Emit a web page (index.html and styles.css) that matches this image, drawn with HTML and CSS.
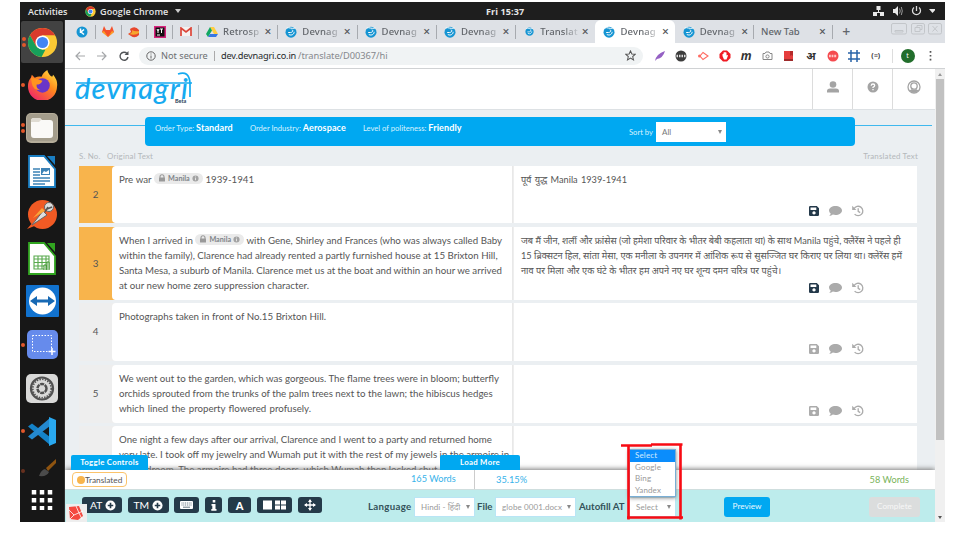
FILE: index.html
```
<!DOCTYPE html>
<html lang="en">
<head>
<meta charset="utf-8">
<title>Devnagri</title>
<link rel="stylesheet" href="styles.css">
</head>
<body>
<svg class="defs" width="0" height="0">
  <symbol id="dev" viewBox="0 0 12 12"><circle cx="6" cy="6.2" r="5.5" fill="#1695d3"/><path d="M1.5 2.2C4 .6 6 3.300 10.500 2M3.200 6.500h2.300c2.800-.2 2.800-2.500 1.300-2.700M3.800 8.500c3 1.500 5.500-.5 5.300-2.700" fill="none" stroke="#fff" stroke-width="1"/></symbol>
  <symbol id="save" viewBox="0 0 10 10"><path fill="currentColor" fill-rule="evenodd" d="M1.200 0h6.600L10 2.200v6.600Q10 10 8.800 10H1.200Q0 10 0 8.800V1.200Q0 0 1.200 0ZM1.500 1.600v2.400h5.800V1.600ZM5 5.300a1.600 1.600 0 1 0 .01 0Z"/></symbol>
  <symbol id="chat" viewBox="0 0 13 10"><path fill="currentColor" d="M6.500 0C10 0 13 1.900 13 4.500S10 9 6.500 9Q5 9 3.900 8.600 2.300 10 .2 10q1.300-1.200 1.500-2.500Q0 6.300 0 4.500C0 1.900 3 0 6.500 0Z"/></symbol>
  <symbol id="hist" viewBox="0 0 12 12"><path fill="none" stroke="currentColor" stroke-width="1.300" d="M2 3.700a4.700 4.700 0 1 1 .6 5.400M6.200 3.300v3.100l2 1.200"/><path fill="currentColor" d="M.2.700v4.200h4.200z"/></symbol>
  <symbol id="lock" viewBox="0 0 8 8"><path d="M2 4V2.700a2 2 0 0 1 4 0V4" fill="none" stroke="#999" stroke-width="1.100"/><rect x="1" y="3.600" width="6" height="4" rx=".6" fill="#999"/></symbol>
  <symbol id="inf" viewBox="0 0 8 8"><circle cx="4" cy="4" r="3.500" fill="#a3a3a3"/><path d="M4 3.500V6M4 1.800v1" stroke="#eee" stroke-width="1"/></symbol>
  <symbol id="plus" viewBox="0 0 12 12"><circle cx="6" cy="6" r="5.500" fill="#fff"/><path d="M6 3v6M3 6h6" stroke="#243a49" stroke-width="1.800"/></symbol>
  <symbol id="chrome" viewBox="0 0 32 32"><circle cx="16" cy="16" r="15" fill="#fbc934"/><path d="M3 8.500A15 15 0 0 1 29 8.500H16L9.500 20Z" fill="#da3b2c"/><path d="M3 8.500 9.500 20 16 23.500h3L15 31A15 15 0 0 1 3 8.500Z" fill="#17a05b"/><circle cx="16" cy="16" r="7.300" fill="#fff"/><circle cx="16" cy="16" r="5.800" fill="#4285f4"/></symbol>
</svg>

<div class="desktop">
  <div class="topbar">
    <span class="activities">Activities</span>
    <svg width="11" height="11"><use href="#chrome"/></svg>
    <span class="appname">Google Chrome</span><span class="caret"></span>
    <span class="clock">Fri 15:37</span>
    <svg class="tray" width="62" height="14" viewBox="0 0 62 14"><g fill="#e8e8e8"><rect x="3.500" y="2" width="4" height="4"/><rect x="0" y="8" width="4" height="4"/><rect x="7" y="8" width="4" height="4"/><path d="M5 6h1v2h4v1H1V8h4zM20 5h2l3-3v10l-3-3h-2zM56 5h7l-3.500 4z"/></g><g fill="none" stroke="#ddd"><path d="M26.500 4.500q1.500 2.500 0 5M28.300 3q2 4 0 8" stroke="#999"/><path d="M41 3.500a4 4 0 1 0 5 0M43.500 2v5" stroke-width="1.300"/></g></svg>
  </div>
  <div class="work">
    <div class="dock">
      <div class="app on"><i class="dots two"></i><svg width="31" height="31"><use href="#chrome"/></svg></div>
      <div class="app"><i class="dots"></i><svg width="31" height="31" viewBox="0 0 32 32"><defs><linearGradient id="ff" x1="1" y1="0" x2=".2" y2="1"><stop offset="0" stop-color="#fff04a"/><stop offset=".45" stop-color="#ff8a1c"/><stop offset="1" stop-color="#f0236b"/></linearGradient></defs><path d="M5 6l3 3q4-2 7-1Q17 3 21 1q1 5 5 7l1-2q5 6 4 12a15 15 0 0 1-30 0Q1 12 4 9Z" fill="url(#ff)"/><circle cx="16" cy="17" r="7.500" fill="#6a35c9"/><path d="M4 9q7 1 12 3-2 4-6 4-1 4 4 6-8 0-9-7Z" fill="#ff951f"/></svg></div>
      <div class="app"><i class="dots two"></i><svg width="32" height="30" viewBox="0 0 32 30"><rect width="32" height="30" rx="5" fill="#b5ad9a"/><rect x="1" y="1" width="30" height="27" rx="4" fill="#a49d8c"/><path d="M5 8q0-3 3-3h6l2 2h8q3 0 3 3v12q0 3-3 3H8q-3 0-3-3Z" fill="#faf9f7"/><path d="M5 8q0-3 3-3h6l1 2-2 2H5z" fill="#dfdbd2"/></svg></div>
      <div class="app"><svg width="28" height="33" viewBox="0 0 28 33"><path d="M1 1h15l11 13v18H1Z" fill="#fff" stroke="#1a7ec2" stroke-width="1.800"/><path d="M19 1h8v9Z" fill="#1a7ec2"/><path d="M5 14h7M5 17h7M5 20h7M5 23h17M5 26h17M5 29h12" stroke="#3d82b5" stroke-width="1.300"/><rect x="13" y="13" width="9" height="7" fill="#3d82b5"/><path d="M14 19l2-3 2 1 3-2v4Z" fill="#fff"/></svg></div>
      <div class="app"><svg width="31" height="31" viewBox="0 0 31 31"><circle cx="15.500" cy="15.500" r="14.500" fill="#f15a24"/><path d="M0 30l7-8 3 4Z" fill="#f15a24"/><path d="M5 26 16 12l4 4Z" fill="#ddd" stroke="#666"/><path d="M6 19 15 9l3 3Z" fill="#f9a63a"/><circle cx="22" cy="8" r="4.500" fill="#ddd" stroke="#666"/><path d="M18 13l3-5M20 10l5-2" stroke="#555" stroke-width="1.500"/></svg></div>
      <div class="app"><svg width="28" height="33" viewBox="0 0 28 33"><path d="M1 1h15l11 13v18H1Z" fill="#fff" stroke="#31a520" stroke-width="1.800"/><path d="M19 1h8v9Z" fill="#31a520"/><path d="M6 14h15v13H6ZM6 17h15M6 20.500h15M6 24h15M10 14v13M14 14v13M18 14v13" fill="none" stroke="#58a94c" stroke-width="1.100"/><path d="M16 28v-5h2v5M19 28v-8h2v8" stroke="#399128" fill="#fff"/></svg></div>
      <div class="app"><svg width="33" height="32" viewBox="0 0 33 32"><rect width="33" height="32" rx="1" fill="#1172ce"/><circle cx="16.500" cy="16" r="13.500" fill="#fff"/><path d="M4 16l7-5v3.500h11V11l7 5-7 5v-3.500H11V21Z" fill="#1769b4"/></svg></div>
      <div class="app"><i class="dots"></i><svg width="31" height="29" viewBox="0 0 31 29"><rect width="31" height="29" rx="5" fill="#668bec"/><rect x="5.500" y="5.500" width="19" height="16" fill="none" stroke="#fff" stroke-dasharray="1.500 1.500"/><path d="M25 18v7M21.500 21.500h7" stroke="#fff" stroke-width="1.500"/></svg></div>
      <div class="app"><svg width="32" height="29" viewBox="0 0 32 29"><rect width="32" height="29" rx="5" fill="#d9d9d8"/><g fill="none" stroke="#505050"><circle cx="16" cy="14.500" r="11" stroke-width="2.200"/><circle cx="16" cy="14.500" r="9.200" stroke-width="1.600" stroke-dasharray="1.400 1.300"/><circle cx="16" cy="14.500" r="4.500" stroke-width="2.500" stroke-dasharray="4 .7"/></g></svg></div>
      <div class="app"><i class="dots"></i><svg width="29" height="29" viewBox="0 0 29 29"><path d="M0 9.500 4 6.500 22 20v8Z" fill="#1482c8"/><path d="M0 19.500 4 22.500 22 9V1Z" fill="#2489cf"/><path d="M21 0l7 3v23l-7 3Z" fill="#29a8ef"/></svg></div>
      <div class="app brush"><i class="dots"></i><svg width="18" height="18" viewBox="0 0 18 18"><path d="M7 9 17 0v4L9 12Z" fill="#8f5410"/><path d="M0 17q2-6 6-7l4 3q-2 5-10 4Z" fill="#4b4b4b"/></svg></div>
      <svg class="grid" width="22" height="22" viewBox="0 0 22 22"><path d="M3 1v20M11 1v20M19 1v20" stroke="#fff" stroke-width="4.500" stroke-dasharray="4.500 3.500"/></svg>
    </div>

    <div class="browser">
      <div class="tabs">
        <div class="pin"><svg width="12" height="12"><circle cx="6" cy="6" r="5.500" fill="#1695d3"/><path d="M4.500 2.500v4.500M8 3.500 5 6l3 2.500" stroke="#fff" stroke-width="1.500" fill="none"/></svg></div>
        <div class="pin"><svg width="12" height="11" viewBox="0 0 12 11"><path d="M2 0l2 4h4l2-4 2 6-6 5-6-5Z" fill="#f5512c"/><path d="M0 6l2-1 4 6ZM12 6l-2-1-4 6Z" fill="#fca326"/></svg></div>
        <div class="pin"><svg width="12" height="12"><path d="M2 3q5-4 9 1v5q-4 4-8 1L0 8l3-2Z" fill="#e8472c"/><path d="M1 8q4-1 3-4 3 2 7 1v2q-4 3-10 1Z" fill="#f5a72d"/></svg></div>
        <div class="pin"><svg width="12" height="12"><path d="M0 0h12v12H0Z" fill="#d8237d"/><path d="M1.500 1.500h9v9h-9Z" fill="#111"/><path d="M3 3l1 2 1-2M4 5v2M6 3h3M7.500 3v4M3 9h3" stroke="#fff" fill="none"/></svg></div>
        <div class="pin"><svg width="12" height="9" viewBox="0 0 12 9"><path d="M0 0h12v9H0Z" fill="#f5f0ef"/><path d="M1 9V1l5 4 5-4v8" fill="none" stroke="#db4437" stroke-width="1.700"/></svg></div>
        <div class="tab"><svg width="12" height="12" viewBox="0 0 12 12"><path d="M4 1h4l4 7H8Z" fill="#ffcd40"/><path d="M4 1l2 3.500L2 11 0 8Z" fill="#11a861"/><path d="M4 8h8l-2 3H2Z" fill="#3777e3"/></svg><span class="t">Retrosp</span><b>×</b></div>
        <div class="tab"><svg width="12" height="12"><use href="#dev"/></svg><span class="t">Devnag</span><b>×</b></div>
        <div class="tab"><svg width="12" height="12"><use href="#dev"/></svg><span class="t">Devnag</span><b>×</b></div>
        <div class="tab"><svg width="12" height="12"><use href="#dev"/></svg><span class="t">Devnag</span><b>×</b></div>
        <div class="tab last"><svg class="small" width="9" height="9"><use href="#dev"/></svg><span class="t">Translat</span><b>×</b></div>
        <div class="tab active"><svg width="12" height="12"><use href="#dev"/></svg><span class="t">Devnag</span><b>×</b></div>
        <div class="tab"><svg width="12" height="12"><use href="#dev"/></svg><span class="t">Devnag</span><b>×</b></div>
        <div class="tab new"><span>New Tab</span><b>×</b></div>
        <span class="add">+</span>
        <svg class="winbtns" width="52" height="12" viewBox="0 0 52 12"><g fill="none" stroke="#c3c6ca"><rect x=".5" y=".5" width="15" height="10.500" rx="1.500"/><rect x="20.500" y=".5" width="13" height="10.500" rx="1.500"/><rect x="37.500" y=".5" width="13" height="10.500" rx="1.500"/><path d="M4 7.500h8v1.500H4zM24 4.500h5v4h-5zM26 4.500v-2h5v4h-2M41.500 3l5 5.500M46.500 3l-5 5.500"/></g></svg>
      </div>

      <div class="toolbar">
        <svg class="nav" width="56" height="12" viewBox="0 0 56 12"><g fill="none" stroke-width="1.200"><path d="M10 6H1M5 2 1 6l4 4M22 6h9M27 2l4 4-4 4" stroke="#a5a7aa"/><path d="M52 3.500A4 4 0 1 0 53 7" stroke="#505356" stroke-width="1.400"/></g><path d="M53.500 1v4h-4z" fill="#505356"/></svg>
        <div class="omni">
          <svg width="10" height="10"><circle cx="5" cy="5" r="4.200" fill="none" stroke="#666"/><path d="M5 4.500V7.500M5 2.500v1" stroke="#666"/></svg>
          <span class="ns">Not secure</span><span class="bar"></span><span class="host">dev.devnagri.co.in</span><span class="path">/translate/D00367/hi</span>
          <svg class="star" width="11" height="11" viewBox="0 0 12 12"><path d="M6 1l1.500 3.400 3.700.3-2.800 2.400.9 3.700L6 8.900l-3.300 1.900.9-3.700L.8 4.700l3.700-.3Z" fill="none" stroke="#555" stroke-width="1.100"/></svg>
        </div>
        <div class="exts">
          <div><svg width="12" height="12"><path d="M1 11Q2 4 11 1 9 8 3 9Z" fill="#9561c4"/></svg></div>
          <div><svg width="12" height="12"><circle cx="6" cy="6" r="5.500" fill="#3c3c3c"/><path d="M1.500 6h9" stroke="#ddd" stroke-width="2.500" stroke-dasharray="1.500 1"/></svg></div>
          <div><svg width="12" height="12"><path d="M6 2.500 11 6 6 9.500 3 6Z" fill="none" stroke="#ff6b62" stroke-width="1.100"/><circle cx="2.500" cy="6" r="1.500" fill="#ff6b62"/></svg></div>
          <div><svg width="12" height="12"><path d="M4 .5h4L11.500 4v4L8 11.500H4L.5 8V4Z" fill="#f01a23"/><path d="M3.500 6V4h1V2.500h1V2h1v.5h1v3l1-.5.5.5-1.500 4H5Z" fill="#fff"/></svg></div>
          <div class="m">m</div>
          <div><svg width="11" height="10" viewBox="0 0 11 10"><path d="M1 2.500h2l1-1.500h3l1 1.500h2v6H1Z" fill="none" stroke="#888"/><circle cx="5.500" cy="5.500" r="1.600" fill="none" stroke="#888"/></svg></div>
          <div><svg width="10" height="12"><path d="M0 1h9v8H0Z" fill="#e53e3e"/><path d="M0 9h9v2H0Z" fill="#9e2b2b"/><path d="M6 1v5l1.500-1L9 6V1" fill="#b52a2a"/></svg></div>
          <div class="hi">अ</div>
          <div><svg width="12" height="12"><circle cx="6" cy="6" r="5.500" fill="#f54a4f"/><path d="M2 6h8" stroke="#ffc6c6" stroke-width="2.500" stroke-dasharray="1.800 .8"/></svg></div>
          <div><svg width="12" height="12"><path d="M3 0v12M9 0v12M0 3h12M0 9h12" stroke="#2863a8" stroke-width="1.500"/></svg></div>
          <div class="code">(≡)</div>
        </div>
        <span class="tsep"></span><span class="avatar">t</span>
        <svg class="more" width="3" height="10"><path d="M1.500 0v10" stroke="#555" stroke-width="1.700" stroke-dasharray="1.700 2.200"/></svg>
      </div>

      <div class="view">
        <div class="page">
          <div class="head">
            <div class="logo">devnagri<span class="beta">Beta</span><svg class="flourish" width="120" height="34" viewBox="0 0 120 34"><path d="M1 13h116M103 4q11-4 12 9v14" fill="none" stroke="#16aaf0" stroke-width="1.700"/></svg></div>
            <div class="cell"><svg width="12" height="12"><circle cx="6" cy="3.500" r="3.300" fill="#a4a4a4"/><path d="M0 11.500V10q0-2.500 3-2.500h6q3 0 3 2.500v1.500Z" fill="#a4a4a4"/></svg></div>
            <div class="cell"><svg width="12" height="12"><circle cx="6" cy="6" r="5.500" fill="#a4a4a4"/><path d="M4.200 4.700Q4.300 3 6 3t1.700 1.500Q7.700 5.500 6 6.300v.8M6 8v1.300" stroke="#fff" stroke-width="1.300" fill="none"/></svg></div>
            <div class="cell end"><svg width="14" height="14"><circle cx="7" cy="7" r="6" fill="none" stroke="#a4a4a4" stroke-width="1.300"/><circle cx="7" cy="6" r="3.200" fill="none" stroke="#a4a4a4" stroke-width="1.300"/><path d="M2.500 10.500 5 9q2 1 4 0l2.500 1.500Q7 15 2.500 10.500Z" fill="#a4a4a4"/></svg></div>
          </div>
          <div class="orderline">
            <div class="order">
              <span class="o1">Order Type: <b>Standard</b></span><span class="o2">Order Industry: <b>Aerospace</b></span><span class="o3">Level of politeness: <b>Friendly</b></span>
              <span class="sort">Sort by</span><span class="select all">All<i></i></span>
            </div>
          </div>
          <div class="labels"><span class="sn">S. No.</span><span>Original Text</span><span class="tt">Translated Text</span></div>

          <div class="rows">
            <div class="row done h57">
              <div class="num">2</div>
              <div class="src"><p class="line w135">Pre war <span class="chip"><svg width="8" height="8"><use href="#lock"/></svg>Manila<svg width="7" height="7"><use href="#inf"/></svg></span> 1939-1941</p></div>
              <div class="dst"><p class="line w106">पूर्व युद्ध Manila 1939-1941</p><div class="acts dark"><svg width="10" height="10"><use href="#save"/></svg><svg width="13" height="10"><use href="#chat"/></svg><svg width="12" height="12"><use href="#hist"/></svg></div></div>
            </div>
            <div class="row done h73">
              <div class="num">3</div>
              <div class="src">
                <p class="line w383">When I arrived in <span class="chip"><svg width="8" height="8"><use href="#lock"/></svg>Manila<svg width="7" height="7"><use href="#inf"/></svg></span> with Gene, Shirley and Frances (who was always called Baby</p>
                <p class="line w377">within the family), Clarence had already rented a partly furnished house at 15 Brixton Hill,</p>
                <p class="line w382">Santa Mesa, a suburb of Manila. Clarence met us at the boat and within an hour we arrived</p>
                <p class="line w190">at our new home zero suppression character.</p>
              </div>
              <div class="dst">
                <p class="line w379">जब मैं जीन, शर्ली और फ्रांसेस (जो हमेशा परिवार के भीतर बेबी कहलाता था) के साथ Manila पहुंचे, क्लैरेंस ने पहले ही</p>
                <p class="line w381">15 ब्रिक्सटन हिल, सांता मेसा, एक मनीला के उपनगर में आंशिक रूप से सुसज्जित घर किराए पर लिया था। क्लेरेंस हमें</p>
                <p class="line w260">नाव पर मिला और एक घंटे के भीतर हम अपने नए घर शून्य दमन चरित्र पर पहुंचे।</p>
                <div class="acts dark"><svg width="10" height="10"><use href="#save"/></svg><svg width="13" height="10"><use href="#chat"/></svg><svg width="12" height="12"><use href="#hist"/></svg></div>
              </div>
            </div>
            <div class="row h58">
              <div class="num">4</div>
              <div class="src"><p class="line w207">Photographs taken in front of No.15 Brixton Hill.</p></div>
              <div class="dst"><div class="acts"><svg width="10" height="10"><use href="#save"/></svg><svg width="13" height="10"><use href="#chat"/></svg><svg width="12" height="12"><use href="#hist"/></svg></div></div>
            </div>
            <div class="row h58">
              <div class="num">5</div>
              <div class="src">
                <p class="line w380">We went out to the garden, which was gorgeous. The flame trees were in bloom; butterfly</p>
                <p class="line w371">orchids sprouted from the trunks of the palm trees next to the lawn; the hibiscus hedges</p>
                <p class="line w192">which lined the property flowered profusely.</p>
              </div>
              <div class="dst"><div class="acts"><svg width="10" height="10"><use href="#save"/></svg><svg width="13" height="10"><use href="#chat"/></svg><svg width="12" height="12"><use href="#hist"/></svg></div></div>
            </div>
            <div class="row h58">
              <div class="num"></div>
              <div class="src">
                <p class="line w371">One night a few days after our arrival, Clarence and I went to a party and returned home</p>
                <p class="line w387">very late. I took off my jewelry and Wumah put it with the rest of my jewels in the armoire in</p>
                <p class="line w315">the bedroom. The armoire had three doors, which Wumah then locked shut.</p>
              </div>
              <div class="dst"></div>
            </div>
          </div>

          <div class="footer">
            <div class="flytabs"><span class="toggle">Toggle Controls</span><span class="load">Load More</span></div>
            <div class="stats">
              <span class="status"><i></i>Translated</span>
              <span class="words">165 Words</span><span class="pct">35.15%</span><span class="green">58 Words</span>
            </div>
            <div class="controls">
              <span class="btn at">AT<svg width="11" height="11"><use href="#plus"/></svg></span>
              <span class="btn tm">TM<svg width="11" height="11"><use href="#plus"/></svg></span>
              <span class="btn kb"><svg width="13" height="8"><rect width="13" height="8" rx="1" fill="#fff"/><path d="M1.500 2h10M1.500 4h10" stroke="#617480" stroke-dasharray="1 .8"/><path d="M3 6.200h7" stroke="#617480"/></svg></span>
              <span class="btn in"><svg width="6" height="11"><path d="M1.700 0h2.600v2.500H1.700ZM.5 4h4v5h1v1.800H.3V9h1V5.800H.5Z" fill="#fff"/></svg></span>
              <span class="btn aa">A</span>
              <span class="btn sp"><svg width="23" height="10"><path d="M0 .5h9v9H0zM12 .5h5v4h-5zM18 .5h5v4h-5zM12 5.500h5v4h-5zM18 5.500h5v4h-5z" fill="#fff"/></svg></span>
              <span class="btn mv"><svg width="12" height="12"><path d="M6 1v10M1 6h10" stroke="#fff" stroke-width="1.300"/><path d="M6 0l2 3H4zM6 12 4 9h4zM0 6l3-2v4zM12 6 9 8V4z" fill="#fff"/></svg></span>
              <span class="lab lang">Language</span><span class="select s1">Hindi - हिंदी<i></i></span>
              <span class="lab file">File</span><span class="select s2">globe 0001.docx<i></i></span>
              <span class="lab auto">Autofill AT</span><span class="select s3">Select<i></i></span>
              <span class="preview">Preview</span><span class="complete">Complete</span>
            </div>
          </div>
        </div>
        <div class="scroll"><i class="up"></i><div class="thumb"></div><i class="down"></i></div>
      </div>
    </div>
  </div>

  <div class="menu"><div class="sel">Select</div><div>Google</div><div>Bing</div><div>Yandex</div></div>
  <svg class="mark" width="64" height="80" viewBox="0 0 64 80"><path d="M0 3.500h31M30 2.500h31.500M59.500 1.500v76M62 75.500H6M7.500 77.500V4" fill="none" stroke="#f80b13" stroke-width="2.600"/></svg>
  <div class="badge"><svg width="14" height="14"><path d="M0 1l10-1 4 10-5 4-8-1Z" fill="#f4493f"/><path d="M0 4l5 5 9-4M5 9l-4 4M7 0l3 7 3 6" stroke="#fff" stroke-width=".8" fill="none"/></svg></div>
</div>
</body>
</html>
```
FILE: styles.css
```
* { box-sizing: border-box; }
body { margin: 0; background: #fff; width: 964px; height: 552px; overflow: hidden; font-family: Lato, "Noto Sans", sans-serif; color: #555; }
svg { display: block; flex: none; }
.defs { position: absolute; }
p { margin: 0; }

.desktop { position: relative; width: 925px; height: 520px; margin: 2px 0 0 20px; background: #171717; }
.topbar { position: relative; height: 18px; display: flex; align-items: center; background: #1e1e1e; color: #e6e6e6; font: 600 9px "Open Sans", sans-serif; }
.activities { width: 65px; padding-left: 8px; white-space: nowrap; }
.appname { margin-left: 4px; width: 72px; white-space: nowrap; letter-spacing: .1px; }
.caret { margin-left: 3px; border: 3px solid transparent; border-top: 4px solid #ccc; border-bottom: 0; }
.clock { margin-left: 305px; white-space: nowrap; font-weight: 700; letter-spacing: .1px; }
.tray { margin-left: auto; margin-right: 10px; }

.work { display: flex; height: 502px; }
.dock { width: 45px; flex: none; background: #171717; border-right: 1px solid #303030; }
.app { position: relative; height: 43.300px; display: flex; align-items: center; justify-content: center; }
.app.on { background: #424242; height: 42px; margin: 1px 1px .3px; border-radius: 2px; }
.app.brush { height: 36px; padding: 0 0 6px 12px; }
.dots { position: absolute; left: 1px; top: 50%; width: 4px; height: 4px; margin-top: -2px; border-radius: 50%; background: #e2572a; }
.dots.two { margin-top: -5px; box-shadow: 0 6px 0 #e2572a; }
.brush .dots { opacity: .4; }
.grid { margin: 0 auto; }

.browser { flex: 1; min-width: 0; display: flex; flex-direction: column; background: #fff; }
.tabs { height: 23px; display: flex; align-items: center; padding-left: 5px; background: #dee1e6; font: 500 9.500px "Noto Sans", sans-serif; color: #61656a; }
.pin { width: 25.800px; height: 14px; display: flex; align-items: center; justify-content: center; border-right: 1px solid #a7aaaf; }
.tab { width: 79.300px; height: 14px; display: flex; align-items: center; padding-left: 7px; border-right: 1px solid #a7aaaf; }
.tab .t { width: 39px; margin-left: 5px; overflow: hidden; white-space: nowrap; letter-spacing: .15px; -webkit-mask-image: linear-gradient(90deg, #000 60%, transparent 105%); mask-image: linear-gradient(90deg, #000 60%, transparent 105%); }
.tab b { width: 12px; text-align: center; font: 500 12px/12px "Noto Sans", sans-serif; color: #54575b; }
.tab .small { margin: 0 1px 0 2px; }
.tab.last { border: 0; }
.tab.active { height: 23px; background: #fff; border: 0; border-radius: 6px 6px 0 0; padding-left: 8px; }
.tab.active + .tab { padding-left: 8px; }
.tab.new { padding-left: 7px; white-space: nowrap; }
.tab.new b { margin-left: auto; margin-right: 4px; }
.add { margin-left: 9px; font-size: 14px; line-height: 14px; }
.winbtns { margin: -6px 2px 0 auto; }

.toolbar { height: 26px; display: flex; align-items: center; border-bottom: 1px solid #d0d2d4; font: 9.500px "Noto Sans", sans-serif; }
.nav { margin-left: 10px; }
.omni { width: 504px; height: 18px; margin-left: 8px; border-radius: 9px; background: #f0f3f4; display: flex; align-items: center; padding: 0 7px; white-space: nowrap; }
.ns { width: 47px; margin-left: 5px; color: #6b6e71; font-size: 9.200px; }
.bar { width: 1px; height: 10px; margin: 0 6px; background: #aaa; }
.host { width: 77px; color: #25282b; font-size: 9.200px; letter-spacing: -.18px; }
.path { color: #85888c; font-size: 9.300px; letter-spacing: -.05px; }
.star { margin-left: auto; }
.exts { display: flex; margin-left: 6px; }
.exts > div { width: 21.600px; height: 16px; display: flex; align-items: center; justify-content: center; color: #333; }
.exts .m { font: italic bold 12px "Noto Sans", sans-serif; }
.exts .hi { font-weight: 700; font-size: 11px; }
.exts .code { font-weight: 700; font-size: 7px; }
.tsep { width: 1px; height: 14px; margin-left: 5px; background: #ddd; }
.avatar { width: 14px; height: 14px; margin-left: 8px; border-radius: 50%; background: #226e2c; color: #fff; font-size: 7px; line-height: 13px; text-align: center; }
.more { margin-left: 14px; }

.view { flex: 1; min-height: 0; display: flex; }
.page { width: 870px; flex: none; background: #ebeff2; display: flex; flex-direction: column; overflow: hidden; position: relative; }
.head { height: 41px; flex: none; display: flex; background: #fff; border-bottom: 1px solid #dde1e4; }
.logo { position: relative; width: 747px; padding-left: 10px; color: #16aaf0; font: italic 500 29px/38px Lato, sans-serif; letter-spacing: 1.200px; }
.flourish { position: absolute; left: 10px; top: 1px; }
.beta { position: absolute; left: 110px; top: 29px; color: #273b58; font: bold 5.500px/6px Lato, sans-serif; letter-spacing: 0; }
.cell { width: 40px; border-left: 1px solid #dcdcdc; display: flex; align-items: center; justify-content: center; padding-bottom: 4px; }
.cell.end { width: 43px; }
.orderline { height: 37px; flex: none; padding: 7px 0 0 80px; background: linear-gradient(#3fb8ee, #3fb8ee) 0 15px / 867px 1px no-repeat; }
.order { width: 710px; height: 29px; border-radius: 4px; background: #00a8f1; color: #d9f2fe; display: flex; padding-left: 10px; font-size: 7.600px; line-height: 22px; white-space: nowrap; }
.order b { font-size: 9px; color: #fff; letter-spacing: .12px; }
.o1 { width: 95px; }
.o2 { width: 113px; }
.o3 { width: 266px; }
.sort { width: 27px; line-height: 30px; }
.select { display: flex; align-items: center; background: #fff; color: #999; white-space: nowrap; font-size: 8px; line-height: 18px; padding: 0 4px 0 6px; border: 1px solid #b9e5f5; }
.select i { margin-left: auto; border: 2.500px solid transparent; border-top: 4px solid #888; border-bottom: 0; }
.all { width: 70px; height: 20px; margin-top: 5px; color: #777; border: 0; }
.labels { height: 19px; flex: none; display: flex; padding: 0 17px 0 14px; font-size: 7.900px; line-height: 18px; letter-spacing: .2px; color: #b4b8bb; }
.sn { width: 28px; }
.tt { margin-left: auto; }

.rows { flex: none; padding-left: 14px; }
.row { display: flex; width: 838px; margin-bottom: 4px; background: #eee; }
.h57 { height: 57px; }
.h73 { height: 73px; margin-bottom: 3px; }
.h58 { height: 58px; margin-bottom: 3.500px; }
.num { width: 33px; display: flex; align-items: center; justify-content: center; padding-bottom: 2px; font-size: 9.800px; color: #555; }
.done .num { background: #f8b44c; box-shadow: 3px 0 #f8b44c; }
.src { position: relative; width: 401px; background: #fff; border-radius: 4px 0 0 4px; padding: 6px 0 0 7px; border-right: 1px solid #e8e8e8; }
.dst { position: relative; width: 403px; margin-left: 1px; background: #fff; padding: 6px 0 0 7px; }
.line { height: 15.100px; font-size: 9.700px; line-height: 15px; color: #555; white-space: nowrap; text-align: justify; text-align-last: justify; }
.dst .line { font-family: Lato, "Noto Sans", "Noto Sans Devanagari", sans-serif; font-size: 9.200px; }
.w106 { width: 106px; } .w135 { width: 135px; } .w190 { width: 190px; } .w192 { width: 192px; }
.w207 { width: 207px; } .w260 { width: 260px; } .w315 { width: 315px; } .w371 { width: 371px; }
.w377 { width: 377px; } .w379 { width: 379px; } .w380 { width: 380px; } .w381 { width: 381px; }
.w382 { width: 382px; } .w383 { width: 383px; } .w387 { width: 387px; }
.chip { display: inline-flex; align-items: center; gap: 2px; height: 11px; padding: 0 4px; border-radius: 6px; background: #eaeaea; color: #7d8388; font-size: 7.200px; font-weight: 700; line-height: 11px; vertical-align: 1px; }
.acts { position: absolute; left: 295px; bottom: 6px; height: 12px; display: flex; align-items: center; color: #ababab; }
.acts svg + svg { margin-left: 10px; }
.acts.dark svg:first-child { color: #24394a; }

.footer { position: absolute; left: 0; right: 0; bottom: 0; height: 52px; background: #fff; box-shadow: 0 -1px 5px #777; }
.flytabs { position: absolute; left: 6px; top: -15px; display: flex; height: 15px; color: #fff; font-size: 7.800px; font-weight: 700; line-height: 15px; text-align: center; }
.flytabs span { background: #00a8f1; border-radius: 2px 2px 0 0; letter-spacing: .3px; }
.toggle { width: 77px; }
.load { width: 80px; margin-left: 292px; }
.stats { height: 20px; display: flex; align-items: center; font-size: 9.600px; border-bottom: 1px solid #cfdede; color: #36b2ea; }
.status { width: 55px; height: 15px; margin-left: 7px; border: 1px solid #fbc36b; border-radius: 4px; display: flex; align-items: center; padding-left: 4px; color: #555; font-size: 8.300px; }
.status i { width: 8px; height: 8px; border-radius: 50%; background: #f8b44c; flex: none; }
.words { width: 64px; height: 19px; line-height: 18px; margin-left: 284px; border-right: 1px solid #ccc; white-space: nowrap; font-size: 9.200px; }
.pct { margin-left: 21px; font-size: 9.300px; }
.green { margin-left: auto; margin-right: 26px; color: #79b35a; font-size: 9.200px; }
.controls { position: relative; height: 32px; display: flex; padding: 7px 0 0 17px; background: #bdecec; }
.btn { height: 16px; display: flex; align-items: center; justify-content: center; gap: 2.500px; border-radius: 3px; background: #243a49; color: #fff; font-size: 10.300px; line-height: 15px; }
.at { width: 40px; padding-left: 2px; } .tm { width: 41px; margin-left: 5.500px; } .kb { width: 25px; margin-left: 5.500px; }
.in { width: 17px; margin-left: 6px; } .aa { width: 23px; margin-left: 6px; font-weight: 900; font-size: 11px; }
.sp { width: 35px; margin-left: 6px; } .mv { width: 24px; margin-left: 5.500px; }
.lab { font-size: 9.700px; font-weight: 700; line-height: 19px; color: #34525a; white-space: nowrap; }
.lang { width: 46px; margin-left: 46.500px; letter-spacing: .3px; } .file { width: 18px; margin-left: 2px; } .auto { width: 50px; margin-left: 3px; }
.controls .select { height: 20px; letter-spacing: .1px; }
.s1 { width: 61px; } .s2 { width: 81px; } .s3 { width: 47px; }
.preview, .complete { height: 20px; border-radius: 3px; font-size: 8.200px; line-height: 19px; text-align: center; color: #e9f8ff; background: #00a8f1; }
.preview { width: 46px; margin-left: 48px; }
.complete { width: 51px; margin-left: 99px; background: #dbdddd; color: #f7f7f7; }

.scroll { width: 10px; background: #f0f0f0; display: flex; flex-direction: column; align-items: center; padding: 4px 0 3px; }
.scroll i { border: 2.500px solid transparent; }
.scroll .up { border-top: 0; border-bottom: 3px solid #999; }
.scroll .down { border-bottom: 0; border-top: 3px solid #555; margin-top: auto; }
.thumb { width: 8px; height: 361px; margin-top: 3px; background: #c1c1c1; }

.menu { position: absolute; left: 609px; top: 447px; width: 47px; height: 48px; background: #fff; border: 1px solid #7aaed5; font-size: 8px; line-height: 11.700px; color: #999; box-shadow: 0 1px 4px #888; }
.menu div { padding-left: 5px; letter-spacing: .15px; }
.menu .sel { background: #0b8dfc; color: #d2ebff; }
.mark { position: absolute; left: 601px; top: 440px; }
.badge { position: absolute; left: 46px; top: 502px; width: 21px; height: 18px; background: #eee; padding: 2px 0 0 3px; }
```
